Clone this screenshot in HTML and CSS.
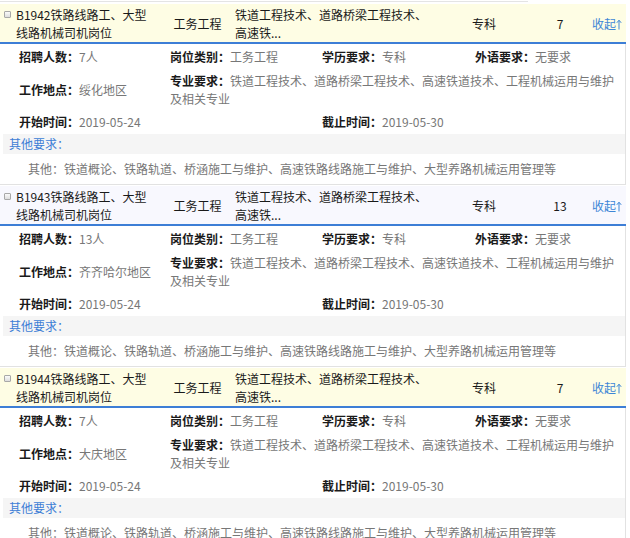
FILE: index.html
```html
<!DOCTYPE html>
<html lang="zh-CN">
<head>
<meta charset="utf-8">
<title>岗位列表</title>
<link rel="stylesheet" href="styles.css">
</head>
<body>
<div class="topline"></div>
<div class="list">

  <div class="item">
    <div class="head yellow">
      <span class="chk"></span>
      <div class="c-title">B1942铁路线路工、大型线路机械司机岗位</div>
      <div class="c-cat">工务工程</div>
      <div class="c-major">铁道工程技术、道路桥梁工程技术、高速铁...</div>
      <div class="c-edu">专科</div>
      <div class="c-num">7</div>
      <div class="c-toggle">收起<svg class="arrow" width="6" height="11" viewBox="0 0 6 11"><path d="M3 10.5V1.5M0.8 3.8L3 1.2L5.2 3.8" fill="none" stroke="currentColor" stroke-width="1"/></svg></div>
    </div>
    <div class="detail">
      <div class="grid">
        <div class="f"><b>招聘人数：</b>7人</div>
        <div class="f"><b>岗位类别：</b>工务工程</div>
        <div class="f"><b>学历要求：</b>专科</div>
        <div class="f"><b>外语要求：</b>无要求</div>
        <div class="f"><b>工作地点：</b>绥化地区</div>
        <div class="f wide"><b>专业要求：</b>铁道工程技术、道路桥梁工程技术、高速铁道技术、工程机械运用与维护及相关专业</div>
        <div class="f"><b>开始时间：</b>2019-05-24</div>
        <div class="f c3"><b>截止时间：</b>2019-05-30</div>
      </div>
      <div class="other-h">其他要求：</div>
      <div class="other">其他：铁道概论、铁路轨道、桥涵施工与维护、高速铁路线路施工与维护、大型养路机械运用管理等</div>
    </div>
  </div>

  <div class="item">
    <div class="head lavender">
      <span class="chk"></span>
      <div class="c-title">B1943铁路线路工、大型线路机械司机岗位</div>
      <div class="c-cat">工务工程</div>
      <div class="c-major">铁道工程技术、道路桥梁工程技术、高速铁...</div>
      <div class="c-edu">专科</div>
      <div class="c-num">13</div>
      <div class="c-toggle">收起<svg class="arrow" width="6" height="11" viewBox="0 0 6 11"><path d="M3 10.5V1.5M0.8 3.8L3 1.2L5.2 3.8" fill="none" stroke="currentColor" stroke-width="1"/></svg></div>
    </div>
    <div class="detail">
      <div class="grid">
        <div class="f"><b>招聘人数：</b>13人</div>
        <div class="f"><b>岗位类别：</b>工务工程</div>
        <div class="f"><b>学历要求：</b>专科</div>
        <div class="f"><b>外语要求：</b>无要求</div>
        <div class="f"><b>工作地点：</b>齐齐哈尔地区</div>
        <div class="f wide"><b>专业要求：</b>铁道工程技术、道路桥梁工程技术、高速铁道技术、工程机械运用与维护及相关专业</div>
        <div class="f"><b>开始时间：</b>2019-05-24</div>
        <div class="f c3"><b>截止时间：</b>2019-05-30</div>
      </div>
      <div class="other-h">其他要求：</div>
      <div class="other">其他：铁道概论、铁路轨道、桥涵施工与维护、高速铁路线路施工与维护、大型养路机械运用管理等</div>
    </div>
  </div>

  <div class="item">
    <div class="head yellow">
      <span class="chk"></span>
      <div class="c-title">B1944铁路线路工、大型线路机械司机岗位</div>
      <div class="c-cat">工务工程</div>
      <div class="c-major">铁道工程技术、道路桥梁工程技术、高速铁...</div>
      <div class="c-edu">专科</div>
      <div class="c-num">7</div>
      <div class="c-toggle">收起<svg class="arrow" width="6" height="11" viewBox="0 0 6 11"><path d="M3 10.5V1.5M0.8 3.8L3 1.2L5.2 3.8" fill="none" stroke="currentColor" stroke-width="1"/></svg></div>
    </div>
    <div class="detail">
      <div class="grid">
        <div class="f"><b>招聘人数：</b>7人</div>
        <div class="f"><b>岗位类别：</b>工务工程</div>
        <div class="f"><b>学历要求：</b>专科</div>
        <div class="f"><b>外语要求：</b>无要求</div>
        <div class="f"><b>工作地点：</b>大庆地区</div>
        <div class="f wide"><b>专业要求：</b>铁道工程技术、道路桥梁工程技术、高速铁道技术、工程机械运用与维护及相关专业</div>
        <div class="f"><b>开始时间：</b>2019-05-24</div>
        <div class="f c3"><b>截止时间：</b>2019-05-30</div>
      </div>
      <div class="other-h">其他要求：</div>
      <div class="other">其他：铁道概论、铁路轨道、桥涵施工与维护、高速铁路线路施工与维护、大型养路机械运用管理等</div>
    </div>
  </div>

</div>
</body>
</html>
```
FILE: styles.css
```css
* { box-sizing: border-box; }
html, body { margin: 0; padding: 0; background: #fff; }
body {
  font-family: "Noto Sans CJK SC", "Microsoft YaHei", sans-serif;
  font-size: 12px;
  color: #222;
  overflow: hidden;
}
.topline {
  width: 528px;
  height: 1px;
  margin-top: 1px;
  background: #e4e4e4;
}
.list {
  width: 626px;
  margin-top: 2px;
}
.item { margin-bottom: 1px; }

.head {
  display: flex;
  align-items: center;
  height: 40px;
  padding-top: 2px;
  border-bottom: 2px solid #3d7ed6;
  line-height: 18px;
  color: #1a1a1a;
}
.yellow { background: #fefde4; }
.lavender { background: #f8f8fe; }
.chk {
  align-self: flex-start;
  width: 7px;
  height: 7px;
  margin: 5px 5px 0 4px;
  border: 1px solid #a8a8a8;
  border-radius: 1px;
  background: linear-gradient(#fafafa, #dedede);
  flex: none;
}
.c-title { width: 136px; flex: none; }
.c-cat { width: 83px; padding-left: 8px; text-align: center; flex: none; }
.c-major { width: 195px; flex: none; }
.c-edu { width: 108px; text-align: center; flex: none; }
.c-num { width: 44px; text-align: center; flex: none; }
.c-toggle {
  flex: none;
  padding-left: 10px;
  color: #3d86d6;
  white-space: nowrap;
}
.arrow { vertical-align: -1px; margin-left: 0; }

.detail {
  padding-left: 3px;
  border-right: 1px solid #e2e2e2;
  border-bottom: 1px solid #e2e2e2;
}
.grid {
  display: grid;
  grid-template-columns: 151px 152px 153px 1fr;
  grid-template-rows: 26px 40px 24px;
  padding: 0 10px 0 16px;
  line-height: 18px;
}
.f {
  display: flex;
  align-items: center;
  color: #777;
}
.f b { color: #1a1a1a; font-weight: bold; white-space: nowrap; }
.f.wide { grid-column: 2 / 5; display: block; align-self: center; }
.f.c3 { grid-column: 3 / 4; }
.other-h {
  height: 20px;
  line-height: 20px;
  padding-left: 6px;
  background: #f5f5f5;
  color: #3d7ed6;
}
.other {
  height: 30px;
  line-height: 30px;
  padding-left: 25px;
  color: #777;
}
```
